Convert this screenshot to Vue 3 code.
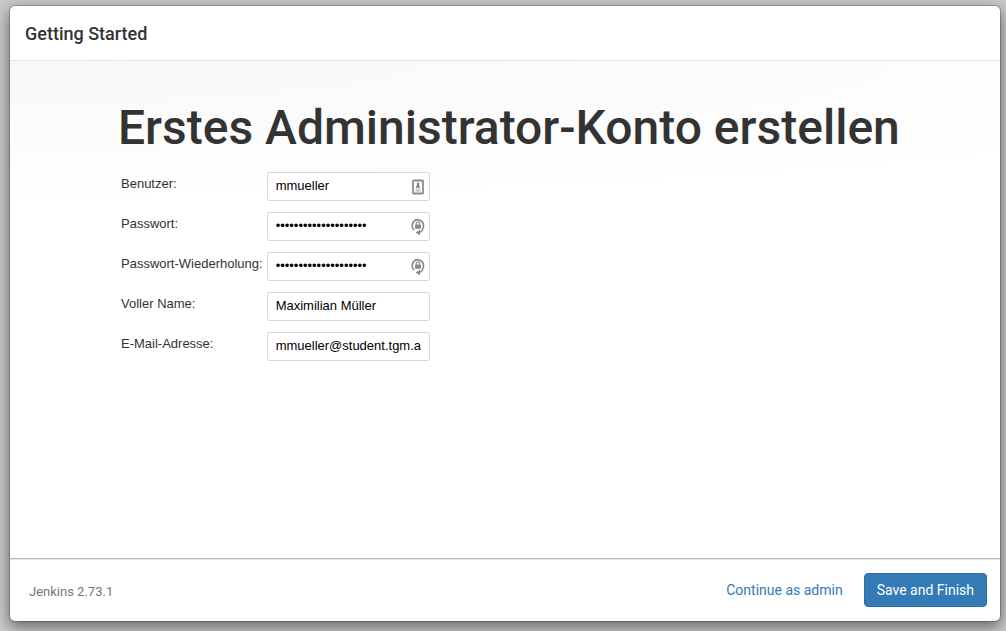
<script setup>
import { reactive } from 'vue'

const fields = reactive([
  { id: 'username', label: 'Benutzer:', type: 'text', value: 'mmueller', icon: 'card' },
  { id: 'password1', label: 'Passwort:', type: 'password', value: 'jenkins-admin-secret', icon: 'lock' },
  { id: 'password2', label: 'Passwort-Wiederholung:', type: 'password', value: 'jenkins-admin-secret', icon: 'lock' },
  { id: 'fullname', label: 'Voller Name:', type: 'text', value: 'Maximilian Müller' },
  { id: 'email', label: 'E-Mail-Adresse:', type: 'text', value: 'mmueller@student.tgm.ac.at' },
])
</script>

<template>
  <div class="backdrop">
    <main class="modal">
      <header class="modal-header">
        <h4>Getting Started</h4>
      </header>
      <section class="modal-body">
        <h1>Erstes Administrator-Konto erstellen</h1>
        <form id="create-admin" class="fields" @submit.prevent>
          <div v-for="f in fields" :key="f.id" class="row">
            <label :for="f.id">{{ f.label }}</label>
            <div class="control">
              <input :id="f.id" v-model="f.value" :type="f.type" autocomplete="off" spellcheck="false" />
              <svg v-if="f.icon === 'card'" class="icon" viewBox="0 0 16 18" aria-hidden="true">
                <rect x="3" y="2.5" width="10" height="13" rx="0.6" fill="#fff" stroke="#8c8c8c" stroke-width="1.8" />
                <circle cx="8" cy="5.8" r="1.2" fill="#808080" />
                <path d="M7.1 6.3h1.8l1.2 3.5H5.9z" fill="#808080" />
                <path d="M5.4 11h5.2M5.4 12.8h5.2" stroke="#b5b5b5" stroke-width="1.2" />
              </svg>
              <svg v-else-if="f.icon === 'lock'" class="icon" viewBox="0 0 16 18" aria-hidden="true">
                <path d="M4 12.2C1.2 9.6 1.7 5.1 4.3 3A5.7 5.7 0 0 1 13.5 7.6C13.5 11 11.6 14 9 14.6" fill="none" stroke="#8c8c8c" stroke-width="1.7" />
                <path d="M10 12v5.2L5.6 14.6z" fill="#858585" />
                <path d="M6.2 6.8V5.6a1.8 1.8 0 0 1 3.6 0v1.2" fill="none" stroke="#999" stroke-width="1.2" />
                <rect x="5.1" y="6.6" width="5.8" height="4.2" rx="0.4" fill="#858585" />
              </svg>
            </div>
          </div>
        </form>
      </section>
      <footer class="modal-footer">
        <span class="version">Jenkins 2.73.1</span>
        <button type="button" class="btn btn-link">Continue as admin</button>
        <button type="submit" form="create-admin" class="btn btn-primary">Save and Finish</button>
      </footer>
    </main>
  </div>
</template>

<style>
body {
  background: #cbcbcb;
}
</style>

<style scoped>
* {
  box-sizing: border-box;
}

.backdrop {
  display: flex;
  min-height: 100vh;
  padding: 5px 5px 9px 9px;
  font-family: Roboto, sans-serif;
  color: #333;
}

.modal {
  display: flex;
  flex: 1;
  flex-direction: column;
  min-width: 0;
  background: #fff;
  background-clip: padding-box;
  border: 1px solid rgba(0, 0, 0, 0.2);
  border-radius: 6px;
  box-shadow: 0 5px 15px rgba(0, 0, 0, 0.5);
}

.modal-header {
  padding: 16px 15px 14px;
  border-bottom: 1px solid #e5e5e5;
}

h4 {
  margin: 0;
  font-size: 18px;
  font-weight: 500;
  line-height: 24px;
}

.modal-body {
  flex: 1;
  padding: 40px 60px 40px 108px;
  background: radial-gradient(ellipse 140% 140px at 0 0, #f8f8f8, #fff);
}

h1 {
  margin: 0 0 18px;
  font-size: 48px;
  font-weight: 500;
  line-height: 53px;
}

.fields {
  display: grid;
  grid-template-columns: max-content 163px;
  gap: 11px 4px;
  padding-left: 3px;
  font-family: "Liberation Sans", Arial, sans-serif;
  font-size: 13px;
}

.row {
  display: contents;
}

label {
  padding-top: 4px;
  line-height: 16px;
}

.control {
  position: relative;
  display: flex;
}

input {
  width: 100%;
  height: 29px;
  padding: 4px 8px 6px;
  border: 1px solid #d9d9d9;
  border-radius: 2px;
  outline: none;
  background: #fff;
  color: #000;
  font: inherit;
}

.icon {
  position: absolute;
  top: 6px;
  right: 4px;
  width: 16px;
  height: 18px;
}

.modal-footer {
  display: flex;
  align-items: center;
  padding: 14px 13px;
  border-top: 1px solid #bbb;
  border-radius: 0 0 6px 6px;
  box-shadow: inset 0 1px #e5e5e5;
}

.version {
  margin-right: auto;
  padding: 2px 6px 0;
  color: #777;
  font-size: 13px;
}

.btn {
  padding: 6px 12px;
  border: 1px solid transparent;
  border-radius: 4px;
  font-family: Roboto, sans-serif;
  font-size: 14px;
  line-height: 20px;
  cursor: pointer;
}

.btn-link {
  margin-right: 8px;
  background: transparent;
  color: #337ab7;
}

.btn-primary {
  border-color: #2e6da4;
  background: #337ab7;
  color: #fff;
}
</style>
